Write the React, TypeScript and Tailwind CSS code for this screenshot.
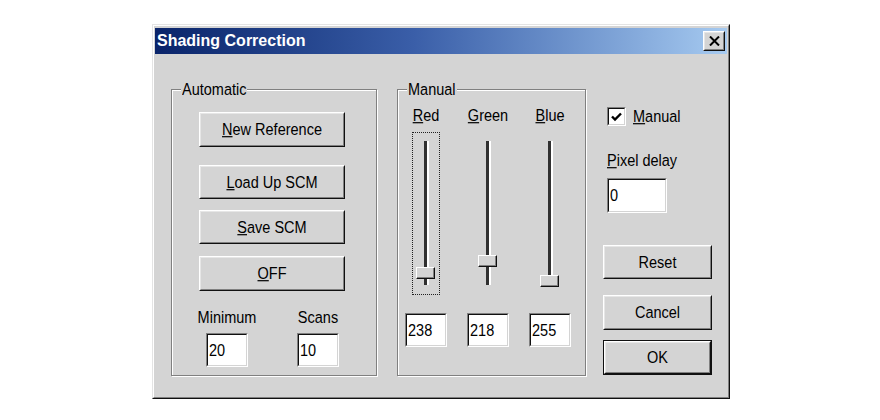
import React from "react";

const T = ({ children }: { children: React.ReactNode }) => (
  <span className="inline-block scale-y-[1.2] leading-[17px] whitespace-nowrap">{children}</span>
);

const Btn = ({ cls, children, def }: { cls: string; children: React.ReactNode; def?: boolean }) => {
  const inner = (
    <div className="h-full border border-t-white border-l-white border-b-[#101010] border-r-[#101010]">
      <div className="h-full border border-t-[#e6e6e6] border-l-[#e6e6e6] border-b-[#808080] border-r-[#808080] flex items-center justify-center">
        <T>{children}</T>
      </div>
    </div>
  );
  if (def) return <div className={`${cls} border border-[#101010]`}>{inner}</div>;
  return <div className={cls}>{inner}</div>;
};

const Field = ({ cls, value }: { cls: string; value: string }) => (
  <div className={`${cls} border border-t-[#808080] border-l-[#808080] border-b-white border-r-white`}>
    <div className="h-full border border-t-[#101010] border-l-[#101010] border-b-[#d4d4d4] border-r-[#d4d4d4] bg-white flex items-center pl-[1px]">
      <T>{value}</T>
    </div>
  </div>
);

const Group = ({ cls, label, children }: { cls: string; label: string; children: React.ReactNode }) => (
  <div className={`relative ${cls} border border-[#808080] shadow-[inset_1px_1px_0_#fff,1px_1px_0_#fff]`}>
    <span className="absolute -top-[9px] left-[9px] px-[1px] bg-[#d4d4d4] leading-[17px]">
      <T>{label}</T>
    </span>
    {children}
  </div>
);

const Slider = ({ focus, thumbTop }: { focus?: boolean; thumbTop: string }) => (
  <div
    className={`relative w-[28px] h-[163px] border border-dotted ${
      focus ? "border-[#202020]" : "border-transparent"
    } flex flex-col items-center pt-[8px]`}
  >
    <div className="w-[5px] h-[144px] border-l-[3px] border-l-[#303030] border-r-[2px] border-r-white" />
    <div
      className={`absolute left-[3px] ${thumbTop} w-[19px] h-[12px] bg-[#d4d4d4] border border-t-white border-l-white border-b-[#101010] border-r-[#101010] shadow-[inset_-1px_-1px_0_#808080]`}
    />
  </div>
);

const Channel = ({
  u,
  rest,
  value,
  focus,
  thumbTop,
}: {
  u: string;
  rest: string;
  value: string;
  focus?: boolean;
  thumbTop: string;
}) => (
  <div className="w-[56px] flex flex-col items-center">
    <T>
      <u>{u}</u>
      {rest}
    </T>
    <div className="mt-[8px]">
      <Slider focus={focus} thumbTop={thumbTop} />
    </div>
    <div className="mt-[18px]">
      <Field cls="w-[42px] h-[34px]" value={value} />
    </div>
  </div>
);

export default function App() {
  return (
    <div className="w-[880px] h-[420px] bg-white pt-[24px] pl-[152px] font-['Liberation_Sans',Arial,sans-serif] text-[14.5px] leading-[17px] text-black">
      <div className="w-[578px] h-[375px] border border-t-[#e4e4e4] border-l-[#e4e4e4] border-b-[#101010] border-r-[#101010] bg-[#d4d4d4]">
        <div className="h-full border border-t-white border-l-white border-b-[#808080] border-r-[#808080] pt-[2px] px-[1px]">
          {/* Title bar */}
          <div className="h-[26px] flex items-center justify-between bg-linear-to-r from-[#0a246a] via-[#3a5ea8] via-45% to-[#a6caf0] pl-[2px] pr-[2px]">
            <span className="text-white font-bold text-[16px] leading-[20px]">Shading Correction</span>
            <div className="w-[22px] h-[20px] border border-t-white border-l-white border-b-[#101010] border-r-[#101010] bg-[#d4d4d4]">
              <div className="h-full border border-t-[#e6e6e6] border-l-[#e6e6e6] border-b-[#808080] border-r-[#808080] flex items-center justify-center">
                <svg width="11" height="10" viewBox="0 0 11 10">
                  <path d="M1 0.5 L10 9.5 M10 0.5 L1 9.5" stroke="#000" strokeWidth="2" />
                </svg>
              </div>
            </div>
          </div>

          {/* Body */}
          <div className="flex pl-[16px] pt-[35px]">
            <Group cls="w-[206px] h-[287px]" label="Automatic">
              <div className="flex flex-col pl-[27px] pt-[22px]">
                <Btn cls="w-[146px] h-[35px]">
                  <u>N</u>ew Reference
                </Btn>
                <div className="mt-[18px]">
                  <Btn cls="w-[146px] h-[34px]">
                    <u>L</u>oad Up SCM
                  </Btn>
                </div>
                <div className="mt-[11px]">
                  <Btn cls="w-[146px] h-[34px]">
                    <u>S</u>ave SCM
                  </Btn>
                </div>
                <div className="mt-[12px]">
                  <Btn cls="w-[146px] h-[35px]">
                    <u>O</u>FF
                  </Btn>
                </div>
                <div className="mt-[18px] flex gap-[35px]">
                  <div className="w-[56px] flex flex-col items-center">
                    <T>Minimum</T>
                    <div className="mt-[7px]">
                      <Field cls="w-[42px] h-[34px]" value="20" />
                    </div>
                  </div>
                  <div className="w-[56px] flex flex-col items-center">
                    <T>Scans</T>
                    <div className="mt-[7px]">
                      <Field cls="w-[42px] h-[34px]" value="10" />
                    </div>
                  </div>
                </div>
              </div>
            </Group>

            <div className="ml-[20px]">
              <Group cls="w-[189px] h-[287px]" label="Manual">
                <div className="flex gap-[6px] pt-[17px]">
                  <Channel u="R" rest="ed" value="238" focus thumbTop="top-[134px]" />
                  <Channel u="G" rest="reen" value="218" thumbTop="top-[122px]" />
                  <Channel u="B" rest="lue" value="255" thumbTop="top-[142px]" />
                </div>
              </Group>
            </div>

            <div className="ml-[17px] w-[110px] flex flex-col">
              <div className="mt-[18px] pl-[4px] flex items-center gap-[7px]">
                <div className="w-[19px] h-[19px] border border-t-[#808080] border-l-[#808080] border-b-white border-r-white">
                  <div className="h-full border border-t-[#101010] border-l-[#101010] border-b-[#d4d4d4] border-r-[#d4d4d4] bg-white flex items-center justify-center">
                    <svg width="11" height="10" viewBox="0 0 11 10">
                      <path d="M1 4.5 L4 7.5 L10 1.5" stroke="#000" strokeWidth="2.4" fill="none" />
                    </svg>
                  </div>
                </div>
                <T>
                  <u>M</u>anual
                </T>
              </div>
              <div className="mt-[26px] pl-[4px]">
                <T>
                  <u>P</u>ixel delay
                </T>
              </div>
              <div className="mt-[9px] pl-[4px]">
                <Field cls="w-[60px] h-[35px]" value="0" />
              </div>
              <div className="mt-[32px]">
                <Btn cls="w-[109px] h-[34px]">Reset</Btn>
              </div>
              <div className="mt-[16px]">
                <Btn cls="w-[109px] h-[35px]">Cancel</Btn>
              </div>
              <div className="mt-[10px]">
                <Btn cls="w-[109px] h-[35px]" def>
                  OK
                </Btn>
              </div>
            </div>
          </div>
        </div>
      </div>
    </div>
  );
}
